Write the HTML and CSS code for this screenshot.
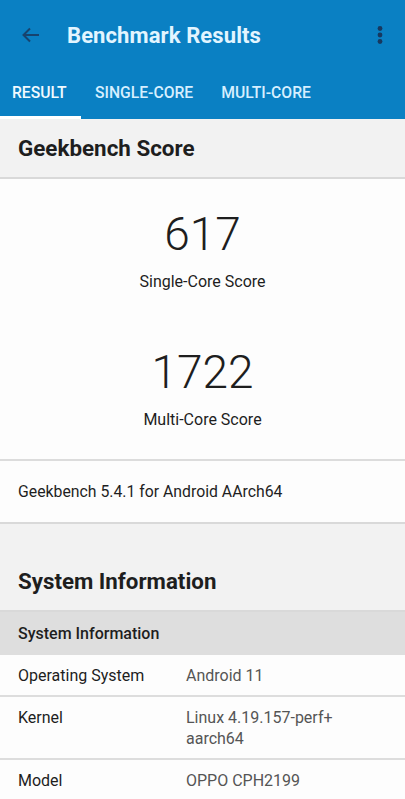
FILE: index.html
```html
<!DOCTYPE html>
<html>
<head>
<meta charset="utf-8">
<link rel="stylesheet" href="styles.css">
</head>
<body>
<header class="appbar">
  <div class="toolbar">
    <svg class="back" width="24" height="24" viewBox="0 0 24 24"><path d="M20 12H5M11 5.5L4.5 12 11 18.5" fill="none" stroke="#17436e" stroke-width="2"/></svg>
    <h1 class="title">Benchmark Results</h1>
    <svg class="more" width="8" height="20" viewBox="0 0 8 20"><circle cx="4" cy="3.5" r="2.4" fill="#17385f"/><circle cx="4" cy="10" r="2.4" fill="#17385f"/><circle cx="4" cy="16.5" r="2.4" fill="#17385f"/></svg>
  </div>
  <nav class="tabs">
    <div class="tab active">RESULT</div>
    <div class="tab">SINGLE-CORE</div>
    <div class="tab">MULTI-CORE</div>
  </nav>
</header>
<main>
  <section class="section-head first"><h2>Geekbench Score</h2></section>
  <section class="scores">
    <div class="score">
      <div class="num">617</div>
      <div class="label">Single-Core Score</div>
    </div>
    <div class="score">
      <div class="num">1722</div>
      <div class="label">Multi-Core Score</div>
    </div>
  </section>
  <div class="version">Geekbench 5.4.1 for Android AArch64</div>
  <section class="section-head sys"><h2>System Information</h2></section>
  <div class="subhead">System Information</div>
  <div class="row"><div class="k">Operating System</div><div class="v">Android 11</div></div>
  <div class="row"><div class="k">Kernel</div><div class="v">Linux 4.19.157-perf+<br>aarch64</div></div>
  <div class="row"><div class="k">Model</div><div class="v">OPPO CPH2199</div></div>
</main>
</body>
</html>
```

FILE: styles.css
```css
* { box-sizing: border-box; }
html, body { margin: 0; padding: 0; }
body {
  background: #f2f2f2;
  font-family: Roboto, "Noto Sans", sans-serif;
  color: #1f1f1f;
  width: 405px;
  overflow: hidden;
}
.appbar { background: #0a80c3; }
.toolbar {
  height: 70px;
  display: flex;
  align-items: center;
  padding: 0 0 0 19px;
}
.back { flex: none; }
.title {
  margin: 0 0 0 24px;
  font-size: 22px;
  font-weight: 700;
  color: #e2f5ff;
  flex: 1;
  letter-spacing: 0.1px;
}
.more { margin-right: 21px; }
.tabs {
  display: flex;
  height: 49px;
  align-items: stretch;
}
.tab {
  font-size: 15.7px;
  font-weight: 500;
  color: #d6efff;
  display: flex;
  align-items: center;
  padding: 0 14px 2px 14px;
  border-bottom: 3px solid transparent;
}
.tab:first-child { padding-left: 12px; }
.tab.active { color: #f1faff; border-bottom-color: #ffffff; width: 81px; }
.section-head {
  background: #f2f2f2;
  border-bottom: 2px solid #d9d9d9;
  padding: 0 18px;
}
.section-head h2 { margin: 0; font-weight: 700; color: #1e1e1e; }
.section-head.first { height: 60px; display: flex; align-items: center; }
.section-head.first h2 { font-size: 22.4px; }
.section-head.sys { height: 88px; display: flex; align-items: flex-end; padding-bottom: 16px; }
.section-head.sys h2 { font-size: 22.3px; }
.scores {
  background: #fdfdfd;
  padding: 27px 0 29px;
  display: flex;
  flex-direction: column;
  gap: 52px;
  border-bottom: 2px solid #dcdcdc;
}
.score { text-align: center; }
.num { font-size: 46px; font-weight: 300; color: #1e1e1e; line-height: 56px; }
.label { font-size: 16px; color: #1e1e1e; margin-top: 10px; line-height: 20px; }
.version {
  background: #fdfdfd;
  height: 63px;
  display: flex;
  align-items: center;
  padding: 0 18px;
  font-size: 15.8px;
  border-bottom: 2px solid #d9d9d9;
}
.subhead {
  background: #dedede;
  height: 43px;
  display: flex;
  align-items: center;
  padding: 0 18px;
  font-size: 16px;
  font-weight: 500;
  color: #1e1e1e;
}
.row {
  background: #fdfdfd;
  display: flex;
  padding: 10px 18px 9px;
  border-bottom: 2px solid #dddddd;
  font-size: 16px;
  line-height: 21px;
}
.k { width: 168px; color: #1e1e1e; }
.v { color: #555; }
```
